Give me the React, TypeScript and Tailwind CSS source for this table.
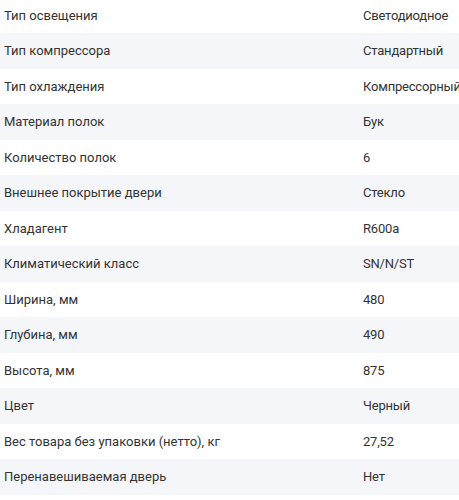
const specs: [string, string][] = [
  ["Тип освещения", "Светодиодное"],
  ["Тип компрессора", "Стандартный"],
  ["Тип охлаждения", "Компрессорный"],
  ["Материал полок", "Бук"],
  ["Количество полок", "6"],
  ["Внешнее покрытие двери", "Стекло"],
  ["Хладагент", "R600a"],
  ["Климатический класс", "SN/N/ST"],
  ["Ширина, мм", "480"],
  ["Глубина, мм", "490"],
  ["Высота, мм", "875"],
  ["Цвет", "Черный"],
  ["Вес товара без упаковки (нетто), кг", "27,52"],
  ["Перенавешиваемая дверь", "Нет"],
];

export default function App() {
  return (
    <div className="w-[459px] h-[500px] overflow-hidden bg-white font-['Roboto',sans-serif] text-[13px] text-[#333333]">
      <div className="-mt-[2.5px]">
        {specs.map(([name, value], i) => (
          <div
            key={name}
            className={`flex items-center h-[35.5px] ${i % 2 === 1 ? "bg-[#f5f6fa]" : "bg-white"}`}
          >
            <div className="flex-1 pl-[4px]">{name}</div>
            <div className="w-[96px] shrink-0 whitespace-nowrap tracking-[-0.2px]">{value}</div>
          </div>
        ))}
      </div>
    </div>
  );
}
